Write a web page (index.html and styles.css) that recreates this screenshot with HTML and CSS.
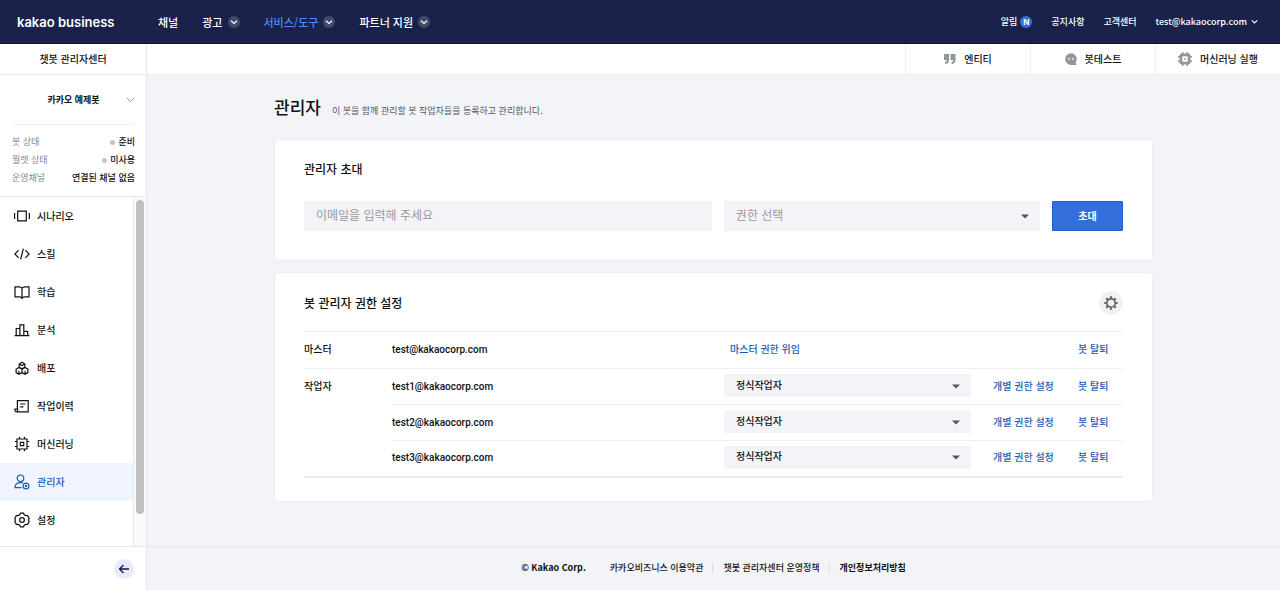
FILE: index.html
```html
<!DOCTYPE html>
<html lang="ko">
<head>
<meta charset="utf-8">
<meta name="viewport" content="width=device-width, initial-scale=1">
<title>관리자 - 챗봇 관리자센터</title>
<link rel="stylesheet" href="styles.css">
</head>
<body>
<svg class="defs" aria-hidden="true">
  <symbol id="chev" viewBox="0 0 12 12"><path d="M3 4.7 6 7.5 9 4.7" fill="none" stroke="currentColor" stroke-width="1.2"/></symbol>
  <symbol id="caret" viewBox="0 0 8 5"><path d="M0 .5h8L4 4.5z" fill="currentColor"/></symbol>
</svg>

<header class="top">
  <a class="logo" href="#">kakao business</a>
  <nav class="gnb">
    <a href="#">채널</a>
    <a href="#">광고 <svg class="round"><use href="#chev"/></svg></a>
    <a href="#" class="on">서비스/도구 <svg class="round"><use href="#chev"/></svg></a>
    <a href="#">파트너 지원 <svg class="round"><use href="#chev"/></svg></a>
  </nav>
  <nav class="util">
    <a class="alarm" href="#">알림 <span class="new">N</span></a>
    <a href="#">공지사항</a>
    <a href="#">고객센터</a>
    <button class="account" type="button">test@kakaocorp.com <svg><use href="#chev"/></svg></button>
  </nav>
</header>

<div class="body">
  <aside class="side">
    <a class="center-name" href="#">챗봇 관리자센터</a>
    <div class="bot">
      <button class="bot-name" type="button"><span>카카오 예제봇</span>
        <svg viewBox="0 0 9 6"><path d="M.8.8 4.5 4.8 8.2.8" fill="none" stroke="#999" stroke-width="1"/></svg>
      </button>
      <dl class="status">
        <div><dt>봇 상태</dt><dd><i></i>준비</dd></div>
        <div><dt>월렛 상태</dt><dd><i></i>미사용</dd></div>
        <div><dt>운영채널</dt><dd>연결된 채널 없음</dd></div>
      </dl>
    </div>
    <div class="menu-wrap">
      <nav class="menu">
        <a href="#"><svg viewBox="0 0 16 16"><path d="M3.7 3.2h8.6v9.6H3.7zM.6 5v6M15.4 5v6"/></svg>시나리오</a>
        <a href="#"><svg viewBox="0 0 16 16"><path d="M4.6 4.2.9 8l3.7 3.8M11.4 4.2 15.1 8l-3.7 3.8M9.4 2.6 6.6 13.4"/></svg>스킬</a>
        <a href="#"><svg viewBox="0 0 16 16"><path d="M8 4.2C7.2 3 6 2.8 4.8 2.8H1v10h4.4c1.4 0 2.2.4 2.6 1.4.4-1 1.2-1.4 2.6-1.4H15v-10h-3.8C10 2.8 8.800 3 8 4.200zV14"/></svg>학습</a>
        <a href="#"><svg viewBox="0 0 16 16"><path d="M.6 13.600h14.800M2.200 13.500V6.500h3.700M5.900 13.500V2.800h3.900v10.700M9.800 9.300h3.900v4.200"/></svg>분석</a>
        <a href="#"><svg viewBox="0 0 16 16"><path d="M5.200 7.200V4L8 2.300 10.800 4v3.200L8 8.800zM5.200 4 8 5.500 10.800 4M2.100 9.200 4.900 7.500 8 9.200v3.400l-3 1.600-2.900-1.600zM8 9.200l3.100-1.700 2.800 1.700v3.400L11 14.200l-3-1.600M4.900 10.800v3M11.100 10.800v3"/></svg>배포</a>
        <a href="#"><svg viewBox="0 0 16 16"><path d="M3.400 10.800V2.600h10.800v11.200H2.600c-1 0-1.700-.6-1.700-1.500v-1.200h2.700v1.300c0 .8-.4 1.300-1.100 1.400M6.200 6h5.300M6.200 8.800h3.200"/></svg>작업이력</a>
        <a href="#"><svg viewBox="0 0 16 16"><path d="M3 3h10v10H3zM6.300 6.300h3.400v3.400H6.300zM5.500 3V.8M10.500 3V.8M5.500 13v2.200M10.500 13v2.200M3 5.500H.8M3 10.500H.8M13 5.500h2.200M13 10.500h2.200"/></svg>머신러닝</a>
        <a href="#" class="on"><svg viewBox="0 0 16 16"><circle cx="6.500" cy="4.300" r="3.300"/><path d="M7.500 13.600H1c0-3.300 2.200-5 5.500-5 .9 0 1.700.1 2.400.4"/><circle cx="12" cy="12" r="2.900"/><circle cx="12" cy="12" r=".6"/></svg>관리자</a>
        <a href="#"><svg viewBox="0 0 16 16"><path d="M6.500 1.200h3l.8 1.500 1.700.9h1.700l1.500 2.800-.8 1.600.8 1.600-1.500 2.800H12l-1.700.9-.8 1.500h-3l-.8-1.500-1.700-.9H2.300L.8 9.600 1.600 8 .8 6.400l1.500-2.800H4l1.700-.9z"/><circle cx="8" cy="8" r="2.400"/></svg>설정</a>
      </nav>
      <div class="track"><div class="thumb"></div></div>
    </div>
    <div class="side-foot">
      <button type="button" aria-label="메뉴 접기"><svg viewBox="0 0 12 12"><path d="M11 6H1.500M5.500 2l-4 4 4 4" fill="none" stroke="currentColor" stroke-width="1.300"/></svg></button>
    </div>
  </aside>

  <div class="page">
    <div class="tools">
      <a href="#"><svg class="i12" viewBox="0 0 12 12"><path d="M0 1h5v6c0 2.500-1.500 4-4 4V9c1 0 1.800-.7 1.800-2H0zM6.500 1h5v6c0 2.500-1.500 4-4 4V9c1 0 1.800-.7 1.800-2H6.500z"/></svg>엔티티</a>
      <a href="#"><svg class="i12" viewBox="0 0 12 12"><path d="M6 .3a5.700 5.700 0 0 1 4.700 8.900L11.700 12H6A5.800 5.800 0 0 1 6 .3z"/><circle cx="4" cy="5.800" r=".9" fill="#fff"/><circle cx="8" cy="5.800" r=".9" fill="#fff"/></svg>봇테스트</a>
      <a href="#"><svg class="i14" viewBox="0 0 14 14"><path d="M3 1.500h1V0h1.500v1.500h3V0H10v1.500h1L12.500 3v1H14v1.500h-1.500v3H14V10h-1.500v1L11 12.500h-1V14H8.500v-1.500h-3V14H4v-1.500H3L1.500 11v-1H0V8.500h1.500v-3H0V4h1.500V3z"/><path d="M4.300 4.300h5.400v5.400H4.300z" fill="#fff"/><path d="M6.200 6.200h1.600v1.600H6.200z"/></svg>머신러닝 실행</a>
    </div>

    <main class="content">
      <div class="head">
        <h1>관리자</h1>
        <p>이 봇을 함께 관리할 봇 작업자들을 등록하고 관리합니다.</p>
      </div>

      <section class="card">
        <h2>관리자 초대</h2>
        <form class="invite">
          <input type="email" aria-label="이메일" placeholder="이메일을 입력해 주세요">
          <div class="select">
            <select aria-label="권한"><option>권한 선택</option></select>
            <svg><use href="#caret"/></svg>
          </div>
          <button type="button">초대</button>
        </form>
      </section>

      <section class="card">
        <div class="card-head">
          <h2>봇 관리자 권한 설정</h2>
          <button class="gear" type="button" aria-label="권한 설정"><svg viewBox="0 0 14 14"><circle cx="7" cy="7" r="4.200" fill="none" stroke="#666" stroke-width="1.700"/><path d="M7 .3v2M7 11.700v2M.3 7h2M11.700 7h2M2.300 2.300l1.400 1.400M10.300 10.300l1.400 1.400M2.300 11.700l1.400-1.400M10.300 3.700l1.400-1.400" stroke="#666" stroke-width="2.200"/></svg></button>
        </div>
        <table class="members">
          <colgroup><col class="c-role"><col><col class="c-auth"><col class="c-set"><col class="c-out"></colgroup>
          <tbody>
          <tr>
            <th scope="row">마스터</th><td class="mail">test@kakaocorp.com</td>
            <td class="delegate"><a href="#">마스터 권한 위임</a></td><td></td><td><a href="#">봇 탈퇴</a></td>
          </tr>
          <tr>
            <th scope="rowgroup" rowspan="3">작업자</th><td class="mail">test1@kakaocorp.com</td>
            <td><div class="select small"><select aria-label="test1 권한"><option>정식작업자</option></select><svg><use href="#caret"/></svg></div></td>
            <td><a href="#">개별 권한 설정</a></td><td><a href="#">봇 탈퇴</a></td>
          </tr>
          <tr>
            <td class="mail">test2@kakaocorp.com</td>
            <td><div class="select small"><select aria-label="test2 권한"><option>정식작업자</option></select><svg><use href="#caret"/></svg></div></td>
            <td><a href="#">개별 권한 설정</a></td><td><a href="#">봇 탈퇴</a></td>
          </tr>
          <tr>
            <td class="mail">test3@kakaocorp.com</td>
            <td><div class="select small"><select aria-label="test3 권한"><option>정식작업자</option></select><svg><use href="#caret"/></svg></div></td>
            <td><a href="#">개별 권한 설정</a></td><td><a href="#">봇 탈퇴</a></td>
          </tr>
          </tbody>
        </table>
      </section>
    </main>

    <footer class="foot">
      <strong>© Kakao Corp.</strong>
      <ul>
        <li><a href="#">카카오비즈니스 이용약관</a></li>
        <li><a href="#">챗봇 관리자센터 운영정책</a></li>
        <li><a href="#" class="bold">개인정보처리방침</a></li>
      </ul>
    </footer>
  </div>
</div>
</body>
</html>
```
FILE: styles.css
```css
* { box-sizing: border-box; }
body {
  margin: 0;
  min-height: 100vh;
  display: flex;
  flex-direction: column;
  background: #f3f4f8;
  color: #111;
  font: 500 10px/16px "Noto Sans CJK KR", sans-serif;
}
a { color: inherit; text-decoration: none; }
button, input, select { font: inherit; color: inherit; border: 0; padding: 0; margin: 0; background: none; }
h1, h2, p, dl, dd, ul { margin: 0; padding: 0; }
.defs { display: none; }

/* top bar */
.top {
  height: 44px;
  display: flex;
  align-items: center;
  padding: 0 20px 0 17px;
  background: #1a214b;
  border-bottom: 1px solid #0d1230;
  color: #fff;
}
.logo { width: 141px; font: 600 13px/20px Inter, sans-serif; }
.gnb { display: flex; gap: 24px; font-size: 11px; }
.gnb a { display: flex; align-items: center; gap: 5px; }
.gnb .on { color: #4d8bf9; }
.round { width: 12px; height: 12px; border-radius: 50%; background: #434a6b; color: #fff; }
.util { margin-left: auto; display: flex; align-items: center; gap: 19px; font-size: 9px; }
.alarm { display: flex; align-items: center; gap: 3px; }
.new { width: 12px; height: 12px; border-radius: 50%; background: #326fdc; font: 700 8px/12px Inter, sans-serif; text-align: center; }
.account { display: flex; align-items: center; gap: 2px; }
.account svg { width: 11px; height: 11px; }

.body { flex: 1; display: flex; }

/* sidebar */
.side { width: 147px; flex: none; display: flex; flex-direction: column; background: #fff; border-right: 1px solid #e6e8ec; }
.center-name { height: 31px; line-height: 30px; text-align: center; border-bottom: 1px solid #ededf0; }
.bot { padding: 0 11px 9px 12px; border-bottom: 1px solid #e8e8ea; font-size: 9px; }
.bot-name { width: 100%; height: 50px; display: flex; align-items: center; padding-left: 9px; border-bottom: 1px solid #f0f0f0; font-weight: 700; }
.bot-name span { flex: 1; }
.bot-name svg { width: 9px; height: 6px; }
.status { padding-top: 8px; }
.status div { display: flex; justify-content: space-between; line-height: 18px; height: 18px; }
.status dt { color: #85878d; font-weight: 400; }
.status dd { display: flex; align-items: center; gap: 3px; }
.status i { width: 5px; height: 5px; border-radius: 50%; background: #c4c4c4; }
.menu-wrap { flex: 1; display: flex; }
.menu { flex: 1; }
.menu a { height: 38px; display: flex; align-items: center; gap: 7px; padding-left: 14px; }
.menu svg { width: 16px; height: 16px; fill: none; stroke: currentColor; stroke-width: 1.2; }
.menu .on { background: #f0f4fe; color: #1c5bb5; }
.track { width: 13px; border-left: 1px solid #e8e8e8; background: #fafafa; padding: 3px 2px 32px; display: flex; }
.thumb { flex: 1; border-radius: 4px; background: #c1c1c1; }
.side-foot { height: 44px; flex: none; display: flex; align-items: center; justify-content: flex-end; padding-right: 12px; border-top: 1px solid #e8e8ea; }
.side-foot button { width: 20px; height: 20px; display: grid; place-items: center; border-radius: 50%; background: #e6eafa; color: #10163f; }
.side-foot svg { width: 12px; height: 12px; }

/* page */
.page { flex: 1; min-width: 0; display: flex; flex-direction: column; }
.tools { height: 31px; display: flex; justify-content: flex-end; background: #fff; border-bottom: 1px solid #ededf0; }
.tools a { width: 125px; display: flex; align-items: center; justify-content: center; gap: 8px; border-left: 1px solid #efeff1; }
.tools svg { fill: #8f979d; }
.i12 { width: 12px; height: 12px; }
.i14 { width: 14px; height: 14px; }
.content { flex: 1; width: 100%; max-width: 903px; margin: 0 auto; padding: 19px 12px 24px; }
.head { display: flex; align-items: baseline; gap: 11px; margin-bottom: 19px; }
h1 { font-size: 17px; line-height: 26px; font-weight: 500; }
.head p { font-size: 9px; font-weight: 400; color: #55575c; }
.card { background: #fff; border: 1px solid #ecedf1; border-radius: 4px; padding: 20px 29px; margin-bottom: 11px; }
h2 { font-size: 12px; line-height: 18px; font-weight: 500; }

.invite { display: grid; grid-template-columns: 409fr 317fr 71px; gap: 12px; margin: 23px 0 9px; height: 30px; font-size: 12px; font-weight: 400; }
.invite input { min-width: 0; padding: 0 12px 2px; background: #f3f4f8; }
.invite input::placeholder { color: #999; opacity: 1; }
.invite .select { color: #999; }
.invite button { border: 1px solid #1f5cc4; border-radius: 1px; background: #326fdc; color: #fff; font-size: 10px; font-weight: 700; }
.select { position: relative; }
.select select { display: block; width: 100%; height: 100%; padding: 0 12px 2px; appearance: none; background: #f3f4f8; }
.select svg { position: absolute; right: 11px; top: 50%; width: 8px; height: 5px; margin-top: -2px; color: #555; pointer-events: none; }
.select.small { width: 247px; height: 23px; }

.card-head { display: flex; justify-content: space-between; align-items: center; margin: -2px 0 16px; }
.gear { width: 24px; height: 24px; display: grid; place-items: center; border-radius: 50%; background: #f1f1f1; }
.gear svg { width: 14px; height: 14px; }

.members { width: 100%; table-layout: fixed; border-collapse: collapse; margin-bottom: 3px; border-bottom: 2px solid #ececee; }
.members th, .members td { height: 36px; padding: 0 0 2px; text-align: left; font-weight: 500; border-top: 1px solid #f0f0f2; }
.members th { vertical-align: top; line-height: 34px; }
.members .mail { padding: 0; font-family: Roboto, "Noto Sans CJK KR", sans-serif; }
.members a { color: #1c5bb5; }
.c-role { width: 88px; }
.c-auth { width: 269px; }
.c-set { width: 85px; }
.c-out { width: 45px; }
.members .delegate { padding-left: 6px; }

/* footer */
.foot { height: 44px; flex: none; display: flex; align-items: center; justify-content: center; gap: 24px; padding-bottom: 2px; border-top: 1px solid #e9eaee; font-size: 9px; }
.foot strong, .foot .bold { font-weight: 700; }
.foot ul { display: flex; list-style: none; }
.foot li { line-height: 10px; }
.foot li + li { margin-left: 9px; padding-left: 10px; border-left: 1px solid #dddee2; }
```
